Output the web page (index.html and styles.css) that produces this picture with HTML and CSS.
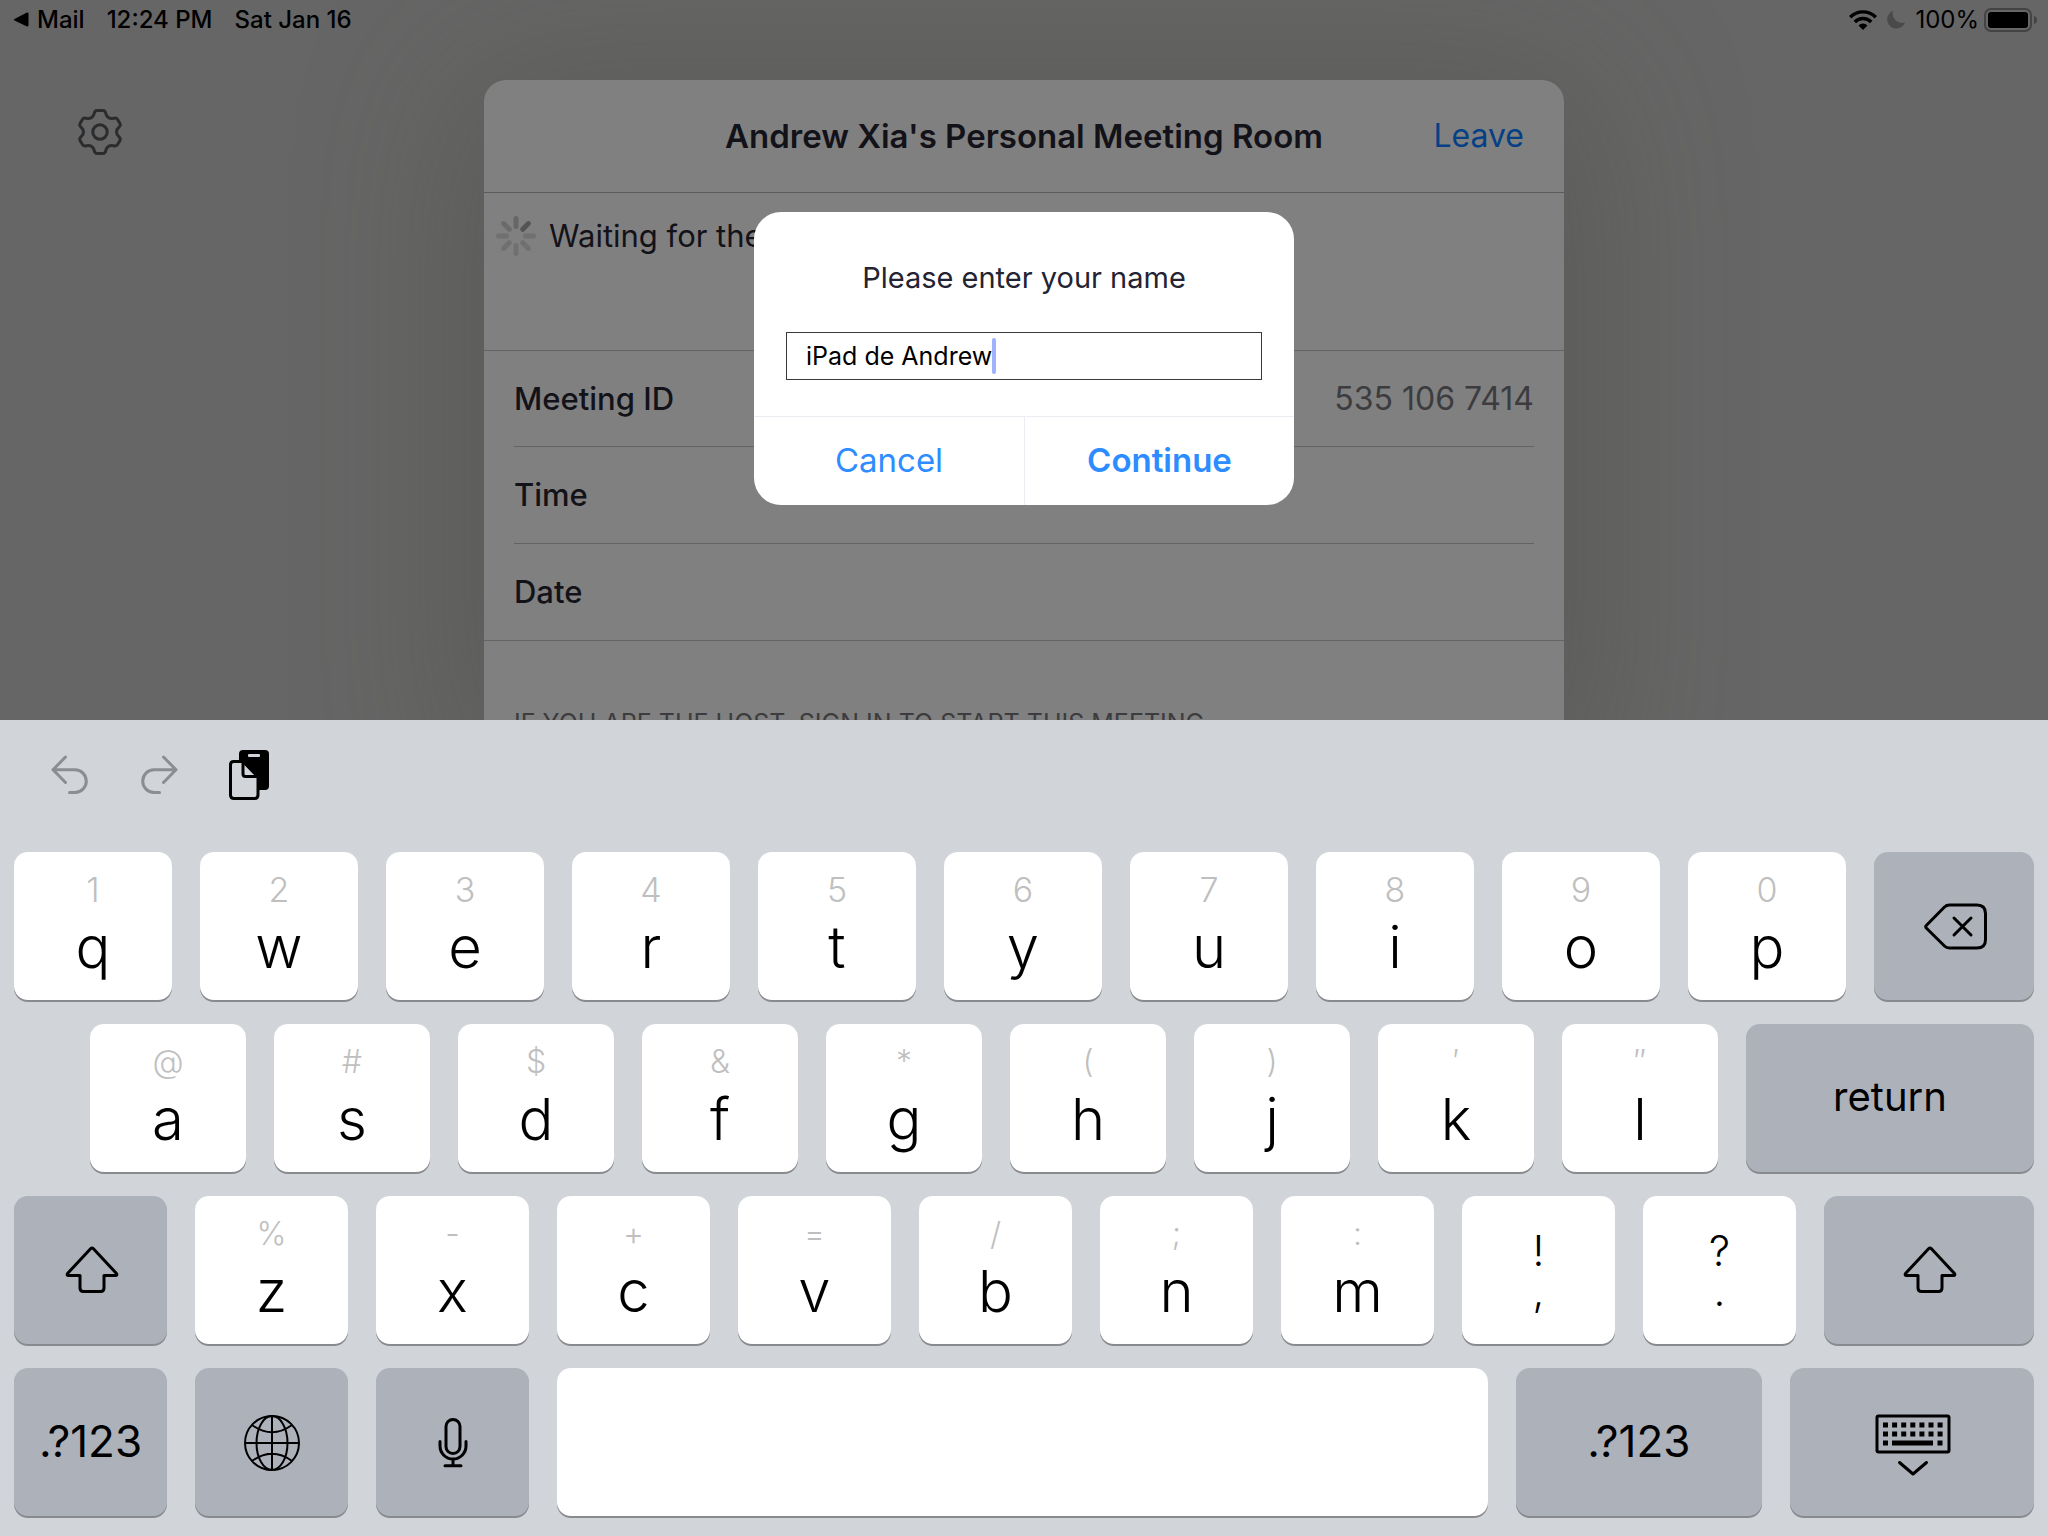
FILE: index.html
```html
<!DOCTYPE html>
<html lang="en">
<head>
<meta charset="utf-8">
<meta name="viewport" content="width=device-width, initial-scale=1">
<title>Join meeting</title>
<link rel="stylesheet" href="styles.css">
</head>
<body>
<main class="scene">
  <header class="status">
    <a class="status-back" href="#">
      <svg width="16" height="16" viewBox="0 0 16 16" aria-hidden="true"><path d="M1.500 7 13.500 .8Q15.500 0 15.500 2V13Q15.500 15 13.500 14.200L1.500 8.600Q0 7.800 1.500 7z"/></svg>
      Mail
    </a>
    <span>12:24 PM</span>
    <span>Sat Jan 16</span>
    <div class="status-right">
      <svg width="28" height="20" viewBox="0 0 28 20" aria-hidden="true"><g fill="none" stroke="#000" stroke-width="3.400"><path d="M1.200 7.200a18 18 0 0 1 25.600 0"/><path d="M5.800 12a11.500 11.500 0 0 1 16.400 0"/></g><path d="M14 20l-4.500-4.600a6.300 6.300 0 0 1 9 0z"/></svg>
      <svg class="moon" width="20" height="20" viewBox="0 0 20 20" aria-hidden="true"><path d="M7 .8A9.200 9.200 0 1 0 19 12.600 9.600 9.600 0 0 1 7 .8z" fill="#4a4a4a"/></svg>
      <span>100%</span>
      <svg class="battery" width="54" height="24" viewBox="0 0 54 24" aria-hidden="true"><rect x="1" y="1" width="46" height="22" rx="6" fill="none" stroke="#434343" stroke-width="2"/><rect x="4" y="4" width="40" height="16" rx="3"/><path d="M50 8q3 1 3 4t-3 4z" fill="#434343"/></svg>
    </div>
  </header>

  <button class="settings" aria-label="Settings">
    <svg width="44" height="48" viewBox="-22 -24 44 48" fill="none" stroke="#2b2c2e" stroke-width="3" stroke-linejoin="round" aria-hidden="true"><circle r="7.200"/><path d="M-2.800-21.500H2.800Q5-21.500 5.600-19.200C6.500-15 9.500-12.900 13.600-13.700Q16.500-14.500 17.600-12.600L19.800-8.800Q21-6.900 19.200-5.200C15.600-2 15.600 2 19.200 5.200Q21 6.900 19.800 8.800L17.600 12.600Q16.500 14.500 13.600 13.700C9.500 12.900 6.500 15 5.600 19.200Q5 21.500 2.800 21.500H-2.800Q-5 21.500-5.600 19.200C-6.500 15-9.500 12.900-13.600 13.700Q-16.500 14.500-17.600 12.600L-19.800 8.800Q-21 6.900-19.200 5.200C-15.600 2-15.600-2-19.200-5.200Q-21-6.900-19.800-8.800L-17.600-12.600Q-16.500-14.500-13.600-13.700C-9.500-12.900-6.500-15-5.600-19.200Q-5-21.500-2.800-21.500z"/></svg>
  </button>

  <section class="sheet">
    <header class="sheet-head">
      <h1>Andrew Xia's Personal Meeting Room</h1>
      <button class="leave">Leave</button>
    </header>
    <div class="waiting">
      <svg width="40" height="40" viewBox="-20 -20 40 40" stroke="#707070" stroke-width="5" stroke-linecap="round" aria-hidden="true"><path d="M0-17.500V-9.500" stroke="#666"/><path d="M12.400-12.400 6.700-6.700" stroke="#545454"/><path d="M9.500 0H17.500M6.700 6.700 12.400 12.400M0 9.500V17.500M-6.700 6.700-12.400 12.400M-9.500 0H-17.500"/><path d="M-6.700-6.700-12.400-12.400" stroke="#6b6b6b"/></svg>
      <p>Waiting for the host to start this meeting</p>
    </div>
    <dl class="details">
      <div><dt>Meeting ID</dt><dd>535 106 7414</dd></div>
      <div><dt>Time</dt><dd></dd></div>
      <div><dt>Date</dt><dd></dd></div>
    </dl>
    <p class="note">IF YOU ARE THE HOST, SIGN IN TO START THIS MEETING</p>
  </section>

  <form class="prompt" role="dialog" aria-labelledby="prompt-label">
    <div class="prompt-body">
      <label id="prompt-label" for="name">Please enter your name</label>
      <div class="field">
        <input id="name" type="text" value="iPad de Andrew">
        <span class="caret"></span>
      </div>
    </div>
    <div class="prompt-actions">
      <button type="button">Cancel</button>
      <button type="button" class="primary">Continue</button>
    </div>
  </form>
</main>

<section class="keyboard" aria-label="Keyboard">
  <div class="tools">
    <button aria-label="Undo"><svg width="38" height="40" viewBox="0 0 38 40" fill="none" stroke="#8c8d91" stroke-width="3" stroke-linecap="round" stroke-linejoin="round" aria-hidden="true"><path d="M14.500 2 2 14.800 14.500 27.500M2 14.800H24A11.300 11.300 0 0 1 24 37.400H18.500"/></svg></button>
    <button aria-label="Redo"><svg width="38" height="40" viewBox="0 0 38 40" fill="none" stroke="#8c8d91" stroke-width="3" stroke-linecap="round" stroke-linejoin="round" aria-hidden="true"><path d="M23.500 2 36 14.800 23.500 27.500M36 14.800H14A11.300 11.300 0 0 0 14 37.400H19.500"/></svg></button>
    <button aria-label="Paste"><svg width="42" height="50" viewBox="0 0 42 50" aria-hidden="true"><path d="M14 0H36Q40 0 40 4V36Q40 40 36 40H30V27L16 14V11H10V4Q10 0 14 0z"/><rect x="19" y="4" width="12" height="3" rx="1" fill="#d1d4d9"/><path d="M4.500 11.500H14L29 27V45Q29 48.500 25.500 48.500H5Q1.500 48.500 1.500 45V15Q1.500 11.500 4.500 11.500z" fill="#d1d4d9" stroke="#000" stroke-width="3"/><path d="M14 12V24Q14 26.500 16.500 26.500H28" fill="none" stroke="#000" stroke-width="3"/></svg></button>
  </div>

  <div class="row row-1">
    <button class="key"><small>1</small>q</button>
    <button class="key"><small>2</small>w</button>
    <button class="key"><small>3</small>e</button>
    <button class="key"><small>4</small>r</button>
    <button class="key"><small>5</small>t</button>
    <button class="key"><small>6</small>y</button>
    <button class="key"><small>7</small>u</button>
    <button class="key"><small>8</small>i</button>
    <button class="key"><small>9</small>o</button>
    <button class="key"><small>0</small>p</button>
    <button class="key dark delete" aria-label="Delete"><svg width="68" height="50" viewBox="-4 -2 68 50" fill="none" stroke="#000" stroke-width="3" stroke-linecap="round" stroke-linejoin="round" aria-hidden="true"><path d="M2.500 22.200 20.500 4Q22.500 2 25.500 2H53Q61.500 2 61.500 10.500V36.500Q61.500 45 53 45H25.500Q22.500 45 20.500 43L2.500 25.200Q1 23.700 2.500 22.200zM30 15 47 32M47 15 30 32"/></svg></button>
  </div>

  <div class="row row-2">
    <button class="key"><small>@</small>a</button>
    <button class="key"><small>#</small>s</button>
    <button class="key"><small>$</small>d</button>
    <button class="key"><small>&amp;</small>f</button>
    <button class="key"><small>*</small>g</button>
    <button class="key"><small>(</small>h</button>
    <button class="key"><small>)</small>j</button>
    <button class="key"><small>′</small>k</button>
    <button class="key"><small>″</small>l</button>
    <button class="key dark word return">return</button>
  </div>

  <div class="row row-3">
    <button class="key dark" aria-label="Shift"><svg width="56" height="48" viewBox="-2 0 56 48" fill="none" stroke="#000" stroke-width="3" stroke-linejoin="round" aria-hidden="true"><path d="M25.800 2.600Q27 1.400 28.200 2.600L51.500 27.500Q52.500 29.500 50.500 29.500H39V42Q39 45.500 35.500 45.500H18.500Q15 45.500 15 42V29.500H3.500Q1.500 29.500 2.500 27.500z"/></svg></button>
    <button class="key"><small>%</small>z</button>
    <button class="key"><small>-</small>x</button>
    <button class="key"><small>+</small>c</button>
    <button class="key"><small>=</small>v</button>
    <button class="key"><small>/</small>b</button>
    <button class="key"><small>;</small>n</button>
    <button class="key"><small>:</small>m</button>
    <button class="key pair"><span>!</span><span>,</span></button>
    <button class="key pair"><span>?</span><span>.</span></button>
    <button class="key dark shift-right" aria-label="Shift"><svg width="56" height="48" viewBox="-2 0 56 48" fill="none" stroke="#000" stroke-width="3" stroke-linejoin="round" aria-hidden="true"><path d="M25.800 2.600Q27 1.400 28.200 2.600L51.500 27.500Q52.500 29.500 50.500 29.500H39V42Q39 45.500 35.500 45.500H18.500Q15 45.500 15 42V29.500H3.500Q1.500 29.500 2.500 27.500z"/></svg></button>
  </div>

  <div class="row row-4">
    <button class="key dark word">.?123</button>
    <button class="key dark" aria-label="Next keyboard"><svg width="58" height="60" viewBox="-29 -31 58 60" fill="none" stroke="#000" stroke-width="2" aria-hidden="true"><circle r="27"/><ellipse rx="15.500" ry="27"/><path d="M0-27V27M-27 0H27M-20-18Q0-3.500 20-18M-20 18Q0 3.500 20 18"/></svg></button>
    <button class="key dark" aria-label="Dictate"><svg width="30" height="52" viewBox="0 -2 30 52" fill="none" stroke="#000" stroke-width="3" stroke-linecap="round" aria-hidden="true"><rect x="8" y="1.500" width="14" height="34" rx="7"/><path d="M2 23.500V28a13 13 0 0 0 26 0V23.500M15 41V47.500M7 47.800H23"/></svg></button>
    <button class="key space" aria-label="Space"></button>
    <button class="key dark word numbers">.?123</button>
    <button class="key dark hide" aria-label="Hide keyboard"><svg width="78" height="67" viewBox="-2 -5 78 67" aria-hidden="true"><rect x="2" y="2" width="72" height="36" rx="1.500" fill="none" stroke="#000" stroke-width="3"/><path d="M8 11H68M8 20H68" fill="none" stroke="#000" stroke-width="5" stroke-dasharray="5 4.100"/><path d="M8 29h5M17 29H58M62.500 29h5" fill="none" stroke="#000" stroke-width="5"/><path d="M24.500 48.500 38 60 51.500 48.500" fill="none" stroke="#000" stroke-width="3" stroke-linecap="round" stroke-linejoin="round"/></svg></button>
  </div>
</section>
</body>
</html>
```
FILE: styles.css
```css
* {
  box-sizing: border-box;
}

body {
  margin: 0;
  min-height: 100vh;
  display: flex;
  flex-direction: column;
  font-family: Inter, "Liberation Sans", sans-serif;
  background: #d1d4d9;
  color: #000;
}

h1,
p,
dl,
dd {
  margin: 0;
}

button,
input {
  font: inherit;
  color: inherit;
  border: 0;
  padding: 0;
  margin: 0;
  background: none;
}

svg {
  display: block;
  flex: none;
}

/* App behind the keyboard */
.scene {
  position: relative;
  flex: 1 1 0;
  min-height: 520px;
  overflow: hidden;
  display: flex;
  flex-direction: column;
  align-items: center;
  background: #666;
}

.status {
  align-self: stretch;
  flex: none;
  display: flex;
  align-items: center;
  gap: 22px;
  height: 40px;
  padding: 0 10px 0 13px;
  font-size: 24px;
  font-weight: 500;
  line-height: 40px;
  position: relative;
  z-index: 1;
}

.status-back {
  display: flex;
  align-items: center;
  gap: 8px;
  color: inherit;
  text-decoration: none;
}

.status-right {
  margin-left: auto;
  display: flex;
  align-items: center;
  gap: 9px;
  font-weight: 400;
}

.battery {
  margin-left: -4px;
}

.settings {
  position: absolute;
  left: 78px;
  top: 108px;
  z-index: 1;
}

/* Meeting card */
.sheet {
  flex: 1 0 auto;
  width: 1080px;
  max-width: 100%;
  margin-top: 40px;
  border-radius: 22px 22px 0 0;
  background: #808080;
  box-shadow: 0 20px 160px 20px rgba(72, 74, 60, .38);
  color: #131219;
  font-size: 31px;
  line-height: 40px;
}

.sheet-head {
  display: grid;
  grid-template-columns: 1fr auto 1fr;
  align-items: center;
  height: 113px;
  padding: 0 40px;
  border-bottom: 1px solid #5c5c5c;
}

.sheet-head h1 {
  grid-column: 2;
  font-size: 33px;
  font-weight: 600;
}

.leave {
  justify-self: end;
  color: #053f85;
  font-size: 32px;
}

.waiting {
  display: flex;
  align-items: flex-start;
  gap: 13px;
  height: 158px;
  padding: 23px 12px;
  border-bottom: 1px solid #646464;
}

.details {
  padding-left: 30px;
  border-bottom: 1px solid #646464;
}

.details div {
  display: flex;
  justify-content: space-between;
  align-items: center;
  height: 97px;
  margin-right: 30px;
  border-bottom: 1px solid #646464;
}

.details div:first-child {
  height: 96px;
}

.details div:last-child {
  height: 96px;
  border-bottom: 0;
}

.details dt {
  font-weight: 500;
}

.details dd {
  color: #3c3c3f;
  font-size: 32px;
}

.note {
  padding: 62px 30px 0;
  color: #3c3c3f;
  font-size: 25px;
  white-space: nowrap;
}

/* Name prompt */
.prompt {
  position: absolute;
  top: 212px;
  left: 50%;
  width: 540px;
  margin-left: -270px;
  border-radius: 27px;
  background: #fff;
  overflow: hidden;
}

.prompt-body {
  display: flex;
  flex-direction: column;
  gap: 34px;
  padding: 46px 32px 36px;
  border-bottom: 1px solid #ececf2;
}

.prompt label {
  color: #232333;
  font-size: 29px;
  line-height: 40px;
  text-align: center;
}

.field {
  display: flex;
  align-items: center;
  height: 48px;
  padding: 0 19px;
  border: 1px solid #3a3a3a;
  font-size: 25px;
}

.field input {
  field-sizing: content;
  height: 40px;
  outline: 0;
}

.caret {
  width: 4px;
  height: 36px;
  border-radius: 2px;
  background: #9fb2fb;
}

.prompt-actions {
  display: grid;
  grid-template-columns: 1fr 1fr;
}

.prompt-actions button {
  height: 88px;
  padding-bottom: 2px;
  color: #2d8cff;
  font-size: 33px;
}

.prompt-actions .primary {
  border-left: 1px solid #ececf2;
  font-weight: 600;
}

/* Keyboard */
.keyboard {
  flex: none;
  display: flex;
  flex-direction: column;
  gap: 24px;
  padding: 0 14px 20px;
  background: #d1d4d9;
}

.tools {
  display: flex;
  align-items: center;
  gap: 51px;
  height: 108px;
  padding: 2px 37px 0;
}

.row {
  display: flex;
  gap: 28px;
}

.row-2 {
  padding-left: 76px;
}

.key {
  flex: 153 1 0;
  min-width: 0;
  height: 148px;
  display: flex;
  flex-direction: column;
  align-items: center;
  border-radius: 14px;
  background: #fff;
  box-shadow: 0 2px 0 #898a8d;
  font-size: 58px;
  font-weight: 350;
  line-height: 72px;
}

.key small {
  height: 60px;
  margin-bottom: -1px;
  padding-top: 16px;
  color: #bfbfc0;
  font-size: 32px;
  line-height: 44px;
}

.row-1 small {
  font-size: 34px;
}

.key.dark {
  justify-content: center;
  background: #adb1ba;
}

.key.word {
  padding-bottom: 2px;
  font-size: 44px;
  font-weight: 400;
}

.key.return {
  font-size: 40px;
}

.key.pair {
  justify-content: center;
  padding-top: 2px;
  font-size: 42px;
  line-height: 40px;
}

.row-1 .key { flex-grow: 158; }
.row-1 .delete { flex-grow: 160; }
.row-2 .key { flex-grow: 156; }
.row-2 .return { flex-grow: 288; }
.row-3 .shift-right { flex-grow: 210; }
.row-4 .space { flex-grow: 930; }
.row-4 .numbers { flex-grow: 246; }
.row-4 .hide { flex-grow: 244; }
```
